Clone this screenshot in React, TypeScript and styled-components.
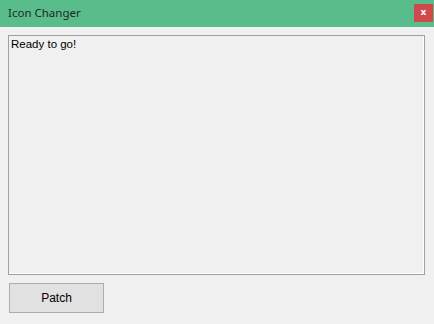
import React, { useState } from "react";
import styled, { createGlobalStyle } from "styled-components";

const GlobalStyle = createGlobalStyle`
  html, body {
    margin: 0;
    padding: 0;
    background: #f0f0f0;
  }
  * {
    box-sizing: border-box;
  }
`;

const Window = styled.div`
  width: 434px;
  height: 324px;
  background: #f0f0f0;
  display: flex;
  flex-direction: column;
  font-family: "Liberation Sans", Arial, sans-serif;
  overflow: hidden;
`;

const TitleBar = styled.div`
  height: 27px;
  background: #59bc8b;
  display: flex;
  justify-content: space-between;
  align-items: flex-start;
  padding: 0 1px 0 8px;
`;

const Title = styled.span`
  font-family: "Noto Sans", "Open Sans", sans-serif;
  font-size: 11.5px;
  line-height: 26px;
  color: #1f2a24;
`;

const CloseButton = styled.button`
  margin-top: 4px;
  width: 19px;
  height: 18px;
  border: none;
  padding: 0 0 2px;
  background: #d0494d;
  color: #ffffff;
  font-family: "DejaVu Sans", sans-serif;
  font-weight: bold;
  font-size: 9px;
  line-height: 16px;
  cursor: pointer;
`;

const Body = styled.div`
  display: flex;
  flex-direction: column;
  padding: 8px 9px 0 8px;
`;

const Output = styled.div`
  height: 240px;
  border: 1px solid #a0a0a0;
  box-shadow: inset -1px -1px 0 #ffffff;
  padding: 2px 2px;
  font-size: 11.5px;
  line-height: 13px;
  color: #000000;
`;

const PatchButton = styled.button`
  margin: 8px 0 0 1px;
  width: 95px;
  height: 30px;
  border: 1px solid #adadad;
  background: #e1e1e1;
  font-family: "Liberation Sans", Arial, sans-serif;
  font-size: 12px;
  color: #000000;
  padding: 0;
  cursor: pointer;
`;

const App = () => {
  const [status, setStatus] = useState("Ready to go!");

  return (
    <>
      <GlobalStyle />
      <Window>
        <TitleBar>
          <Title>Icon Changer</Title>
          <CloseButton>x</CloseButton>
        </TitleBar>
        <Body>
          <Output>{status}</Output>
          <PatchButton onClick={() => setStatus("Patching...")}>Patch</PatchButton>
        </Body>
      </Window>
    </>
  );
};

export default App;
